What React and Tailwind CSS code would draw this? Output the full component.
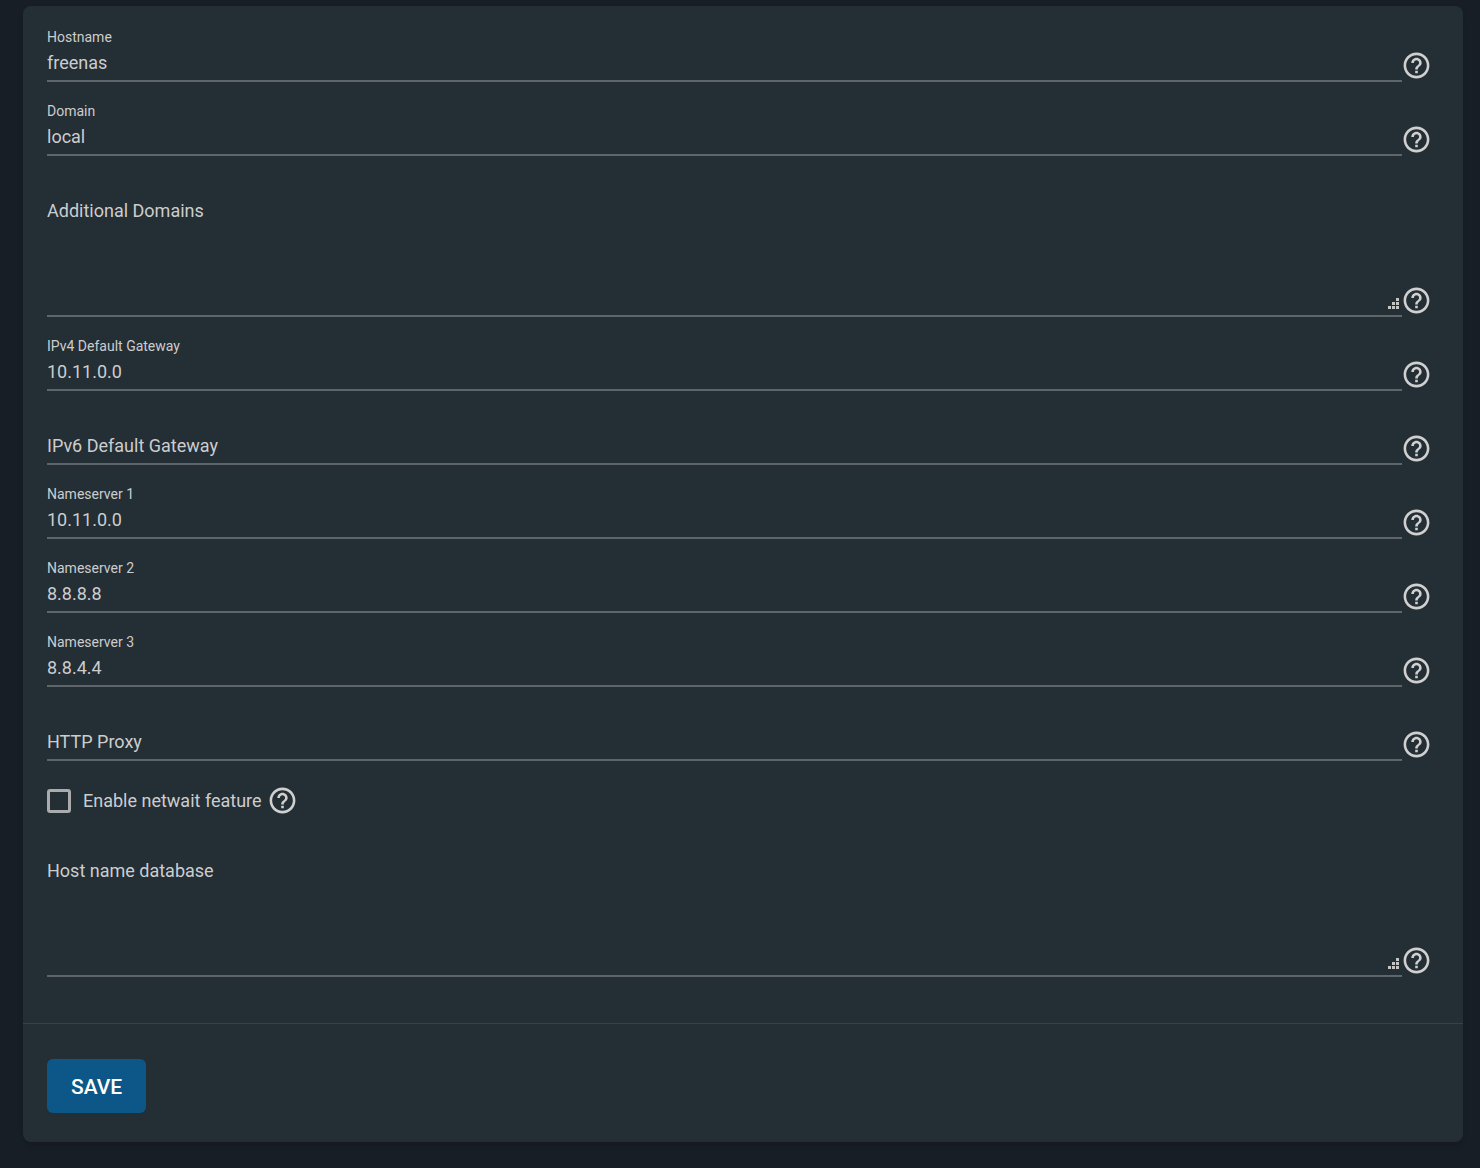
import { MdHelpOutline } from 'react-icons/md'

const NETWORK_FIELDS = [
  { id: 'hostname', label: 'Hostname', value: 'freenas' },
  { id: 'domain', label: 'Domain', value: 'local' },
  { id: 'domains', label: 'Additional Domains', value: '', multiline: true },
  { id: 'ipv4gateway', label: 'IPv4 Default Gateway', value: '10.11.0.0' },
  { id: 'ipv6gateway', label: 'IPv6 Default Gateway', value: '' },
  { id: 'nameserver1', label: 'Nameserver 1', value: '10.11.0.0' },
  { id: 'nameserver2', label: 'Nameserver 2', value: '8.8.8.8' },
  { id: 'nameserver3', label: 'Nameserver 3', value: '8.8.4.4' },
  { id: 'httpproxy', label: 'HTTP Proxy', value: '' },
]

function HelpButton({ label }) {
  return (
    <button type="button" aria-label={`Help: ${label}`} className="-ml-px shrink-0 pb-px text-[#d0d0d0]">
      <MdHelpOutline className="size-[31px]" />
    </button>
  )
}

function ResizeGrip() {
  return (
    <svg viewBox="0 0 11 11" className="pointer-events-none absolute right-[3px] bottom-1.5 size-[11px]" fill="#c3c5c5" shapeRendering="crispEdges" aria-hidden="true">
      <path d="M8 0h3v3H8zM4 4h3v3H4zM8 4h3v3H8zM0 8h3v3H0zM4 8h3v3H4zM8 8h3v3H8z" />
    </svg>
  )
}

function Field({ id, label, value, multiline }) {
  return (
    <div className="flex items-end">
      <div className="relative flex min-w-0 flex-1 flex-col border-b-2 border-[#5f666b] pt-5">
        {value ? (
          <>
            <label htmlFor={id} className="h-[18px] text-sm leading-[18px]">{label}</label>
            <input id={id} defaultValue={value} className="h-[34px] w-full bg-transparent pb-0.5 text-lg leading-8 outline-none" />
          </>
        ) : (
          <div className="grid">
            {/* empty fields keep the label resting on the first line */}
            <label htmlFor={id} className="pointer-events-none col-start-1 row-start-1 pt-5 text-lg leading-[30px]">{label}</label>
            {multiline ? (
              <textarea id={id} className="col-start-1 row-start-1 block h-[139px] w-full resize-none bg-transparent pt-5 text-lg leading-[30px] outline-none" />
            ) : (
              <input id={id} className="col-start-1 row-start-1 h-[52px] w-full bg-transparent pt-5 text-lg outline-none" />
            )}
          </div>
        )}
        {multiline && <ResizeGrip />}
      </div>
      <HelpButton label={label} />
    </div>
  )
}

export default function App() {
  return (
    <main className="min-h-screen bg-[#181e26] pt-1.5 pr-[17px] pb-[26px] pl-[23px] font-[Roboto,sans-serif] text-[#cccdce]">
      <form className="rounded-lg bg-[#242e35] shadow-md" onSubmit={(e) => e.preventDefault()}>
        <div className="border-b border-[#36414a] pt-0.5 pr-[31px] pb-[46px] pl-6">
          {NETWORK_FIELDS.map((field) => (
            <Field key={field.id} {...field} />
          ))}
          <div className="flex h-20 items-center">
            <label className="flex items-center gap-3 pr-1.5 text-lg">
              <input type="checkbox" className="size-6 appearance-none rounded-[3px] border-3 border-[#a9abad] checked:bg-[#0d5788]" />
              Enable netwait feature
            </label>
            <HelpButton label="Enable netwait feature" />
          </div>
          <div className="-mt-[25px]">
            <Field id="hosts" label="Host name database" value="" multiline />
          </div>
        </div>
        <div className="px-6 pt-[35px] pb-[29px]">
          <button type="submit" className="h-[54px] rounded-md bg-[#0d5788] px-6 pt-0.5 text-[21px] leading-7 font-medium text-white">
            SAVE
          </button>
        </div>
      </form>
    </main>
  )
}
